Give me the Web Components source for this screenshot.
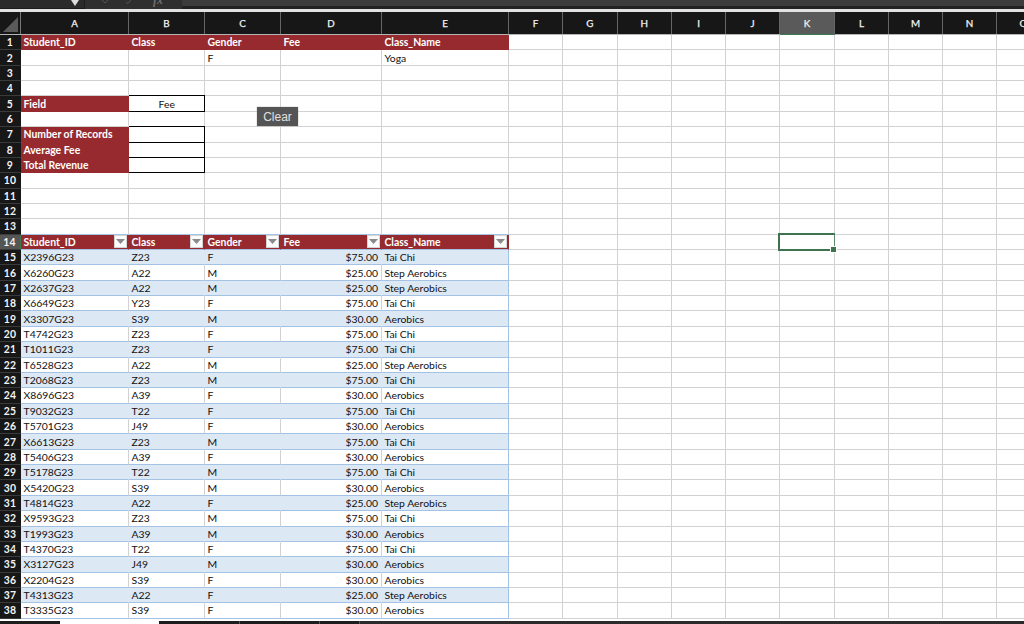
<!DOCTYPE html>
<html>
<head>
<meta charset="utf-8">
<title>Sheet</title>
<style>
  html, body { margin: 0; height: 100%; overflow: hidden; background: #fff; }
</style>
</head>
<body>
<excel-window></excel-window>
<script>
const COLS = [
  ['A', 108], ['B', 76], ['C', 76], ['D', 101], ['E', 127], ['F', 54], ['G', 54.5], ['H', 54.5],
  ['I', 54], ['J', 54], ['K', 55], ['L', 54], ['M', 54], ['N', 54], ['O', 54]
];
const TEMPLATE_COLS = '21px ' + COLS.map(c => c[1] + 'px').join(' ');
const ROW_H = 15.37;

const DATA = [
  ['X2396G23','Z23','F','$75.00','Tai Chi'],
  ['X6260G23','A22','M','$25.00','Step Aerobics'],
  ['X2637G23','A22','M','$25.00','Step Aerobics'],
  ['X6649G23','Y23','F','$75.00','Tai Chi'],
  ['X3307G23','S39','M','$30.00','Aerobics'],
  ['T4742G23','Z23','F','$75.00','Tai Chi'],
  ['T1011G23','Z23','F','$75.00','Tai Chi'],
  ['T6528G23','A22','M','$25.00','Step Aerobics'],
  ['T2068G23','Z23','M','$75.00','Tai Chi'],
  ['X8696G23','A39','F','$30.00','Aerobics'],
  ['T9032G23','T22','F','$75.00','Tai Chi'],
  ['T5701G23','J49','F','$30.00','Aerobics'],
  ['X6613G23','Z23','M','$75.00','Tai Chi'],
  ['T5406G23','A39','F','$30.00','Aerobics'],
  ['T5178G23','T22','M','$75.00','Tai Chi'],
  ['X5420G23','S39','M','$30.00','Aerobics'],
  ['T4814G23','A22','F','$25.00','Step Aerobics'],
  ['X9593G23','Z23','M','$75.00','Tai Chi'],
  ['T1993G23','A39','M','$30.00','Aerobics'],
  ['T4370G23','T22','F','$75.00','Tai Chi'],
  ['X3127G23','J49','M','$30.00','Aerobics'],
  ['X2204G23','S39','F','$30.00','Aerobics'],
  ['T4313G23','A22','F','$25.00','Step Aerobics'],
  ['T3335G23','S39','F','$30.00','Aerobics']
];

// Fila de la hoja: numero + 15 celdas
class SheetRow extends HTMLElement {
  set config(cfg) {
    this.attachShadow({ mode: 'open' });
    const cells = COLS.map((c, i) => {
      const d = (cfg.cells && cfg.cells[i]) || {};
      const cls = ['cell', d.cls || '', i < 5 ? (cfg.cls || '') : ''].join(' ');
      const arrow = d.filter ? '<filter-arrow></filter-arrow>' : '';
      return `<div class="${cls}"><span>${d.text || ''}</span>${arrow}</div>`;
    }).join('');
    this.shadowRoot.innerHTML = `
      <style>
        :host { display: grid; grid-template-columns: ${TEMPLATE_COLS}; height: ${ROW_H}px; }
        .num {
          background: #171717; color: #f4f4f4; font-weight: 700; font-size: 10.4px; letter-spacing: .3px;
          display: flex; align-items: center; justify-content: center;
          border-bottom: 1px solid #3a3a3a; box-sizing: border-box; padding-right: 1px;
        }
        .num.on { background: #555; border-right: 1px solid #3d7a4f; }
        .cell {
          box-sizing: border-box; border-right: 1px solid #d2d2d2; border-bottom: 1px solid #d2d2d2;
          padding: 0 2px 0 2.5px; display: flex; align-items: center; justify-content: space-between;
          color: #111; font-size: 10.4px; white-space: nowrap; overflow: hidden; min-width: 0;
        }
        .red { background: #962a2e; color: #fff; font-weight: 700; border-right-color: #962a2e; border-bottom-color: #962a2e; }
        .band { background: #dde8f5; border-right-color: #dde8f5; border-bottom-color: #a4c3e4; }
        .plain { border-bottom-color: #a4c3e4; }
        .hdr { border-bottom-color: #a4c3e4; padding-right: 1px; }
        .right { justify-content: flex-end; padding-right: 3px; }
        .center { justify-content: center; }
        .box { background: #fff; border: 1px solid #000; border-left-width: 0; margin-top: -1px; }
        .edge { border-right-color: #a4c3e4; }
      </style>
      <div class="num ${cfg.on ? 'on' : ''}">${cfg.n}</div>${cells}`;
  }
}

// Flecha del autofiltro
class FilterArrow extends HTMLElement {
  constructor() {
    super();
    this.attachShadow({ mode: 'open' }).innerHTML = `
      <style>
        :host { display: flex; flex: none; width: 13px; height: 13px; background: #fbfbfb; box-sizing: border-box; border: 1px solid #d4d4d4; align-items: center; justify-content: center; }
      </style>
      <svg width="9" height="5" viewBox="0 0 9 5"><path d="M0 0H9L4.5 5Z" fill="#8a8a8a"/></svg>`;
  }
}

// Cabecera de columnas A..O
class ColumnHeader extends HTMLElement {
  constructor() {
    super();
    const heads = COLS.map(c => `<div class="h ${c[0] === 'K' ? 'on' : ''}">${c[0]}</div>`).join('');
    this.attachShadow({ mode: 'open' }).innerHTML = `
      <style>
        :host {
          display: grid; grid-template-columns: ${TEMPLATE_COLS}; height: 23px;
          background: #171717; border-bottom: 1px solid #b5b5b5; box-sizing: border-box;
        }
        .corner { border-right: 1px solid #777; display: flex; align-items: flex-end; justify-content: flex-end; padding: 0 2px 2px 0; }
        .h {
          border-right: 1px solid #666; color: #f4f4f4; font-size: 9.8px; font-weight: 400; -webkit-text-stroke: .25px #f4f4f4;
          display: flex; align-items: center; justify-content: center; box-sizing: border-box;
        }
        .h.on { background: #5a5a5a; border-bottom: 1px solid #3d7a4f; margin-bottom: -1px; }
      </style>
      <div class="corner"><svg width="15" height="15" viewBox="0 0 15 15"><path d="M15 0V15H0Z" fill="#5a5a5a"/></svg></div>${heads}`;
  }
}

// Barra superior y barra de pestanas
class TopBar extends HTMLElement {
  constructor() {
    super();
    this.attachShadow({ mode: 'open' }).innerHTML = `
      <style>
        :host { display: flex; height: 12px; box-sizing: border-box; background: #2a2a2a; border-bottom: 3px solid #e2e2e2; box-shadow: inset 0 -1px 0 #1c1c1c; }
        .name { width: 85px; display: flex; justify-content: flex-end; padding-right: 5px; box-sizing: border-box; border-right: 1px solid #1c1c1c; }
        .fx { width: 97px; background: #2f2f2f; color: #6e6e6e; font: italic 700 12px "Liberation Serif", serif; display: flex; box-sizing: border-box; overflow: hidden; }
        .fx svg { margin: 0 0 0 16px; flex: none; }
        .fx span { display: block; margin: -6px 0 0 22px; line-height: 12px; }
        .input { flex: 1; background: linear-gradient(#3c3c3c 0 6px, #222 6px); }
      </style>
      <div class="name"><svg width="8" height="6" viewBox="0 0 8 6"><path d="M0 0H8L4 6Z" fill="#ddd"/></svg></div>
      <div class="fx">
        <svg width="30" height="4" viewBox="0 0 30 4" fill="none" stroke="#555"><path d="M1 0L4 3M7 0L4 3"/><path d="M25 2L27 3.5L30 0"/></svg>
        <span>fx</span>
      </div>
      <div class="input"></div>`;
  }
}

class TabBar extends HTMLElement {
  constructor() {
    super();
    this.attachShadow({ mode: 'open' }).innerHTML = `
      <style>
        :host { display: flex; flex: 1; min-height: 0; margin-top: 2.5px; background: #2b2b2b; }
        .off { width: 60px; background: #1d1d1d; }
        .tab { width: 99px; background: #fff; }
        .off2 { background: #1d1d1d; border-right: 1px solid #555; }
      </style>
      <div class="off"></div><div class="tab"></div>
      <div class="off2" style="width:80px"></div><div class="off2" style="width:79px"></div><div class="off2" style="width:39px"></div>`;
  }
}

// Boton flotante sobre la hoja
class ClearButton extends HTMLElement {
  constructor() {
    super();
    this.attachShadow({ mode: 'open' }).innerHTML = `
      <style>
        :host {
          position: absolute; left: 257px; top: 107px; width: 41px; height: 19px; box-sizing: border-box;
          background: #555; color: #e0e0e0; font: 12px "Liberation Sans", sans-serif;
          display: flex; align-items: center; justify-content: center;
          box-shadow: 0 0 1px #888;
        }
      </style><slot></slot>`;
  }
}

// Marco de la celda activa
class ActiveCell extends HTMLElement {
  constructor() {
    super();
    this.attachShadow({ mode: 'open' }).innerHTML = `
      <style>
        :host { position: absolute; left: 778px; top: 232.5px; width: 57px; height: 18px; box-sizing: border-box; border: 2px solid #3f7350; border-right: 1px solid #5f8a6d; }
        i { position: absolute; right: -2px; bottom: -3px; width: 5px; height: 5px; background: #3f7350; outline: 1px solid #fff; }
      </style><i></i>`;
  }
}

class ExcelWindow extends HTMLElement {
  constructor() {
    super();
    this.attachShadow({ mode: 'open' }).innerHTML = `
      <style>
        :host {
          display: flex; flex-direction: column; position: relative; width: 1024px; height: 624px;
          overflow: hidden; background: #fff; font-family: Lato, "Liberation Sans", sans-serif;
        }
        .rows { flex: none; }
      </style>
      <top-bar></top-bar>
      <column-header></column-header>
      <div class="rows"></div>
      <tab-bar></tab-bar>
      <clear-button>Clear</clear-button>
      <active-cell></active-cell>`;
    const rows = this.shadowRoot.querySelector('.rows');
    const names = ['Student_ID', 'Class', 'Gender', 'Fee', 'Class_Name'];
    const red = t => ({ text: t, cls: 'red' });
    const layout = {
      1: { cells: names.map(red) },
      2: { cells: [{}, {}, { text: 'F' }, {}, { text: 'Yoga' }] },
      5: { cells: [red('Field'), { text: 'Fee', cls: 'box center' }] },
      7: { cells: [red('Number of Records'), { cls: 'box' }] },
      8: { cells: [red('Average Fee'), { cls: 'box' }] },
      9: { cells: [red('Total Revenue'), { cls: 'box' }] },
      13: { cls: 'plain' },
      14: { on: true, cells: names.map(t => ({ text: t, cls: 'red hdr', filter: true })) }
    };
    for (let n = 1; n <= 38; n++) {
      const row = document.createElement('sheet-row');
      let cfg = layout[n] || {};
      if (n >= 15) {
        const d = DATA[n - 15];
        cfg = {
          cls: n % 2 ? 'band' : 'plain',
          cells: d.map((t, i) => ({ text: t, cls: (i === 3 ? 'right' : '') + (i === 4 ? ' edge' : '') }))
        };
      }
      row.config = { n, ...cfg };
      rows.append(row);
    }
  }
}

customElements.define('filter-arrow', FilterArrow);
customElements.define('sheet-row', SheetRow);
customElements.define('column-header', ColumnHeader);
customElements.define('top-bar', TopBar);
customElements.define('tab-bar', TabBar);
customElements.define('clear-button', ClearButton);
customElements.define('active-cell', ActiveCell);
customElements.define('excel-window', ExcelWindow);
</script>
</body>
</html>
